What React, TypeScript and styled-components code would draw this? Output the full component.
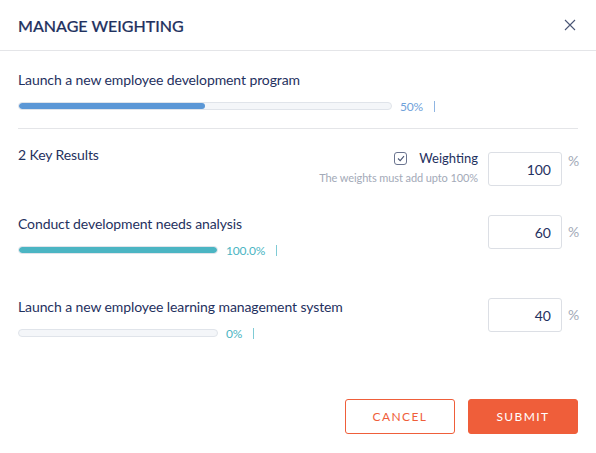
import React from "react";
import styled, { createGlobalStyle } from "styled-components";

const GlobalStyle = createGlobalStyle`
  html, body {
    margin: 0;
    padding: 0;
    background: #fff;
  }
  body {
    font-family: Lato, "Open Sans", "Liberation Sans", sans-serif;
    color: #1f3160;
  }
`;

const NAVY = "#1f3160";
const MUTED = "#a3aab8";
const ORANGE = "#ef5e3a";

const Modal = styled.div`
  width: 596px;
  height: 453px;
  display: flex;
  flex-direction: column;
  background: #fff;
`;

const Header = styled.div`
  height: 50px;
  display: flex;
  align-items: center;
  justify-content: space-between;
  padding: 0 18px;
  border-bottom: 1px solid #e4e5e8;
`;

const Title = styled.h1`
  margin: 0;
  font-size: 16px;
  font-weight: 500;
  color: ${NAVY};
  -webkit-text-stroke: 0.2px ${NAVY};
`;

const CloseButton = styled.button`
  border: 0;
  background: none;
  padding: 0;
  margin-right: 2px;
  width: 12px;
  height: 12px;
  display: flex;
  cursor: pointer;
`;

const Body = styled.div`
  padding: 19px 18px 0;
  flex: 1;
  display: flex;
  flex-direction: column;
`;

const ItemTitle = styled.div`
  font-size: 14px;
  line-height: 20px;
  letter-spacing: -0.1px;
  color: ${NAVY};
`;

const BarRow = styled.div`
  display: flex;
  align-items: center;
  height: 14px;
  margin-top: 9px;
`;

const Track = styled.div<{ $w: number }>`
  width: ${(p) => p.$w}px;
  height: 6px;
  border-radius: 4px;
  background: #f4f6f9;
  border: 1px solid #e0e4ea;
  overflow: hidden;
`;

const Fill = styled.div<{ $color: string }>`
  height: 100%;
  background: ${(p) => p.$color};
  border-radius: 4px;
`;

const Pct = styled.span<{ $color: string }>`
  margin-left: 8px;
  font-size: 12px;
  letter-spacing: -0.2px;
  color: ${(p) => p.$color};
`;

const Tick = styled.span<{ $color: string }>`
  width: 1px;
  height: 11px;
  margin-left: 11px;
  background: ${(p) => p.$color};
`;

const Divider = styled.hr`
  border: 0;
  border-top: 1px solid #e4e5e8;
  margin: 15px 0 0;
`;

const Row = styled.div<{ $top: number }>`
  display: grid;
  grid-template-columns: 1fr auto 74px 16px;
  align-items: start;
  margin-top: ${(p) => p.$top}px;
`;

const WeightBox = styled.div`
  display: flex;
  flex-direction: column;
  align-items: flex-end;
  margin-right: 10px;
  padding-top: 3px;
`;

const CheckLine = styled.label`
  display: flex;
  align-items: center;
  gap: 12px;
  font-size: 13px;
  line-height: 20px;
  color: ${NAVY};
`;

const Check = styled.span`
  width: 11px;
  height: 11px;
  border: 1px solid #6b7590;
  border-radius: 3px;
  display: flex;
  align-items: center;
  justify-content: center;
`;

const Hint = styled.div`
  font-size: 11px;
  line-height: 16px;
  margin-top: 2px;
  letter-spacing: -0.1px;
  color: ${MUTED};
`;

const WeightInput = styled.input<{ $top: number }>`
  box-sizing: border-box;
  width: 74px;
  height: 34px;
  margin-top: ${(p) => p.$top}px;
  border: 1px solid #dcdfe5;
  border-radius: 3px;
  padding: 0 10px 0 0;
  text-align: right;
  font-family: inherit;
  font-size: 14px;
  color: ${NAVY};
  outline: none;
`;

const Percent = styled.span<{ $top: number }>`
  margin-top: ${(p) => p.$top}px;
  margin-left: 6px;
  font-size: 14px;
  line-height: 20px;
  color: ${MUTED};
`;

const Footer = styled.div`
  margin-top: auto;
  display: flex;
  justify-content: flex-end;
  gap: 13px;
  padding: 0 18px 19px;
`;

const Btn = styled.button<{ $solid?: boolean }>`
  width: 110px;
  height: 35px;
  border-radius: 3px;
  border: 1px solid ${ORANGE};
  background: ${(p) => (p.$solid ? ORANGE : "#fff")};
  color: ${(p) => (p.$solid ? "#fff" : ORANGE)};
  font-family: inherit;
  font-size: 12px;
  letter-spacing: 1.4px;
  cursor: pointer;
`;

const keyResults = [
  { title: "Conduct development needs analysis", progress: 100, label: "100.0%", weight: "60", top: 28 },
  { title: "Launch a new employee learning management system", progress: 0, label: "0%", weight: "40", top: 40 },
];

const TEAL = "#4bb5c3";
const BLUE = "#5b97d6";

export default function App() {
  return (
    <Modal>
      <GlobalStyle />
      <Header>
        <Title>MANAGE WEIGHTING</Title>
        <CloseButton aria-label="close">
          <svg width="12" height="12" viewBox="0 0 12 12">
            <path d="M1 1 L11 11 M11 1 L1 11" stroke="#4a5675" strokeWidth="1.1" fill="none" />
          </svg>
        </CloseButton>
      </Header>

      <Body>
        <ItemTitle>Launch a new employee development program</ItemTitle>
        <BarRow>
          <Track $w={372}>
            <Fill $color={BLUE} style={{ width: "50%" }} />
          </Track>
          <Pct $color="#6fa2da">50%</Pct>
          <Tick $color="#8fb5e2" />
        </BarRow>
        <Divider />

        <Row $top={16}>
          <ItemTitle>2 Key Results</ItemTitle>
          <WeightBox>
            <CheckLine>
              <Check>
                <svg width="8" height="7" viewBox="0 0 8 7">
                  <path d="M1 3.5 L3.2 5.6 L7 1.2" stroke="#4a5675" strokeWidth="1.1" fill="none" />
                </svg>
              </Check>
              Weighting
            </CheckLine>
            <Hint>The weights must add upto 100%</Hint>
          </WeightBox>
          <WeightInput $top={7} defaultValue="100" />
          <Percent $top={6}>%</Percent>
        </Row>

        {keyResults.map((kr) => (
          <Row $top={kr.top} key={kr.title}>
            <div>
              <ItemTitle>{kr.title}</ItemTitle>
              <BarRow>
                <Track $w={198}>
                  <Fill $color={TEAL} style={{ width: `${kr.progress}%` }} />
                </Track>
                <Pct $color={TEAL}>{kr.label}</Pct>
                <Tick $color="#7fcbd5" />
              </BarRow>
            </div>
            <span />
            <WeightInput $top={1} defaultValue={kr.weight} />
            <Percent $top={8}>%</Percent>
          </Row>
        ))}
      </Body>

      <Footer>
        <Btn>CANCEL</Btn>
        <Btn $solid>SUBMIT</Btn>
      </Footer>
    </Modal>
  );
}
